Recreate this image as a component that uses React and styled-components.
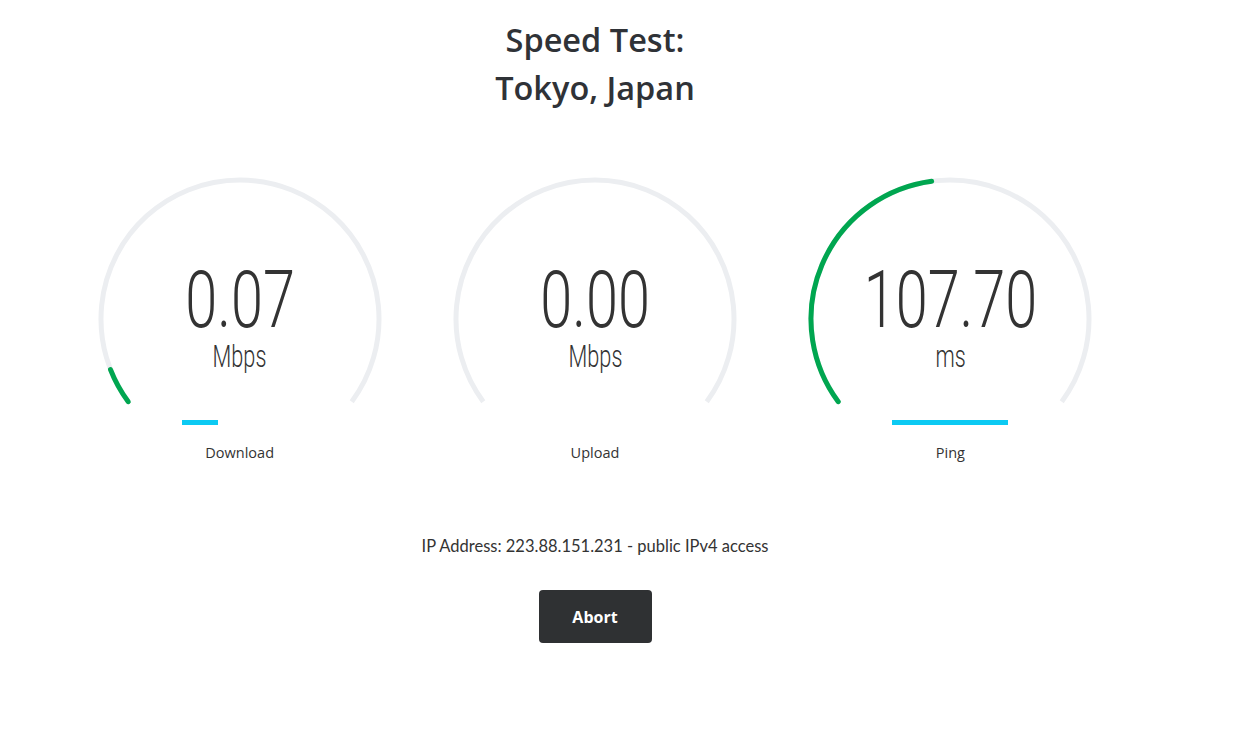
import React from 'react';
import styled, { createGlobalStyle } from 'styled-components';

const GlobalStyle = createGlobalStyle`
  html, body {
    margin: 0;
    padding: 0;
    background: #ffffff;
  }
  body {
    font-family: Lato, "Open Sans", sans-serif;
    color: #333333;
  }
`;

const Page = styled.div`
  width: 1190px;
  padding-top: 16px;
  display: flex;
  flex-direction: column;
  align-items: center;
`;

const Title = styled.h1`
  margin: 0;
  font-family: "Open Sans", sans-serif;
  font-weight: 600;
  font-size: 32.5px;
  line-height: 48px;
  color: #2f3237;
  text-align: center;
`;

const GaugeRow = styled.div`
  width: 1066px;
  margin-top: 65px;
  display: grid;
  grid-template-columns: repeat(3, 1fr);
`;

const GaugeColumn = styled.div`
  display: flex;
  flex-direction: column;
  align-items: center;
`;

const Dial = styled.div`
  position: relative;
  width: 300px;
  height: 230px;
`;

const DialSvg = styled.svg`
  position: absolute;
  left: 0;
  top: 0;
`;

const Reading = styled.div`
  position: absolute;
  left: 0;
  right: 0;
  top: 83px;
  display: flex;
  flex-direction: column;
  align-items: center;
  font-family: Roboto, sans-serif;
  font-weight: 300;
  color: #333333;
`;

const Value = styled.span`
  display: block;
  font-size: 80px;
  line-height: 80px;
  transform: scaleX(0.72);
`;

const Unit = styled.span`
  display: block;
  font-size: 31px;
  line-height: 34px;
  transform: scaleX(0.7);
`;

const Track = styled.div`
  width: 116px;
  height: 5px;
  margin-top: 13px;
`;

const Fill = styled.div`
  height: 100%;
  background: #0ccaf3;
`;

const Label = styled.div`
  margin-top: 18px;
  font-family: "Open Sans", sans-serif;
  font-weight: 500;
  font-size: 14.5px;
  color: #333333;
`;

const IpLine = styled.p`
  margin: 74px 0 0;
  font-family: Lato, sans-serif;
  font-size: 16.5px;
  color: #333333;
`;

const AbortButton = styled.button`
  margin-top: 34px;
  width: 113px;
  height: 53px;
  border: none;
  border-radius: 4px;
  background: #2f3133;
  color: #ffffff;
  font-family: "Open Sans", sans-serif;
  font-weight: 700;
  font-size: 16px;
  cursor: pointer;
`;

const CX = 150;
const CY = 142;
const R = 139;
const START = 143.5;
const SWEEP = 253;

const point = (deg) => {
  const a = (deg * Math.PI) / 180;
  return [CX + R * Math.cos(a), CY + R * Math.sin(a)];
};

const arcPath = (fraction) => {
  const [x1, y1] = point(START);
  const [x2, y2] = point(START + SWEEP * fraction);
  const large = SWEEP * fraction > 180 ? 1 : 0;
  return `M ${x1} ${y1} A ${R} ${R} 0 ${large} 1 ${x2} ${y2}`;
};

const gauges = [
  { label: 'Download', value: '0.07', unit: 'Mbps', arc: 0.06, bar: 0.31 },
  { label: 'Upload', value: '0.00', unit: 'Mbps', arc: 0, bar: 0 },
  { label: 'Ping', value: '107.70', unit: 'ms', arc: 0.47, bar: 1 },
];

const Gauge = ({ label, value, unit, arc, bar }) => (
  <GaugeColumn>
    <Dial>
      <DialSvg width="300" height="230" viewBox="0 0 300 230">
        <path d={arcPath(1)} fill="none" stroke="#eceef1" strokeWidth="5" />
        {arc > 0 && (
          <path d={arcPath(arc)} fill="none" stroke="#00a650" strokeWidth="5" strokeLinecap="round" />
        )}
      </DialSvg>
      <Reading>
        <Value>{value}</Value>
        <Unit>{unit}</Unit>
      </Reading>
    </Dial>
    <Track>
      <Fill style={{ width: `${bar * 100}%` }} />
    </Track>
    <Label>{label}</Label>
  </GaugeColumn>
);

export default function App() {
  return (
    <>
      <GlobalStyle />
      <Page>
        <Title>
          Speed Test:
          <br />
          Tokyo, Japan
        </Title>
        <GaugeRow>
          {gauges.map((g) => (
            <Gauge key={g.label} {...g} />
          ))}
        </GaugeRow>
        <IpLine>IP Address: 223.88.151.231 - public IPv4 access</IpLine>
        <AbortButton>Abort</AbortButton>
      </Page>
    </>
  );
}
